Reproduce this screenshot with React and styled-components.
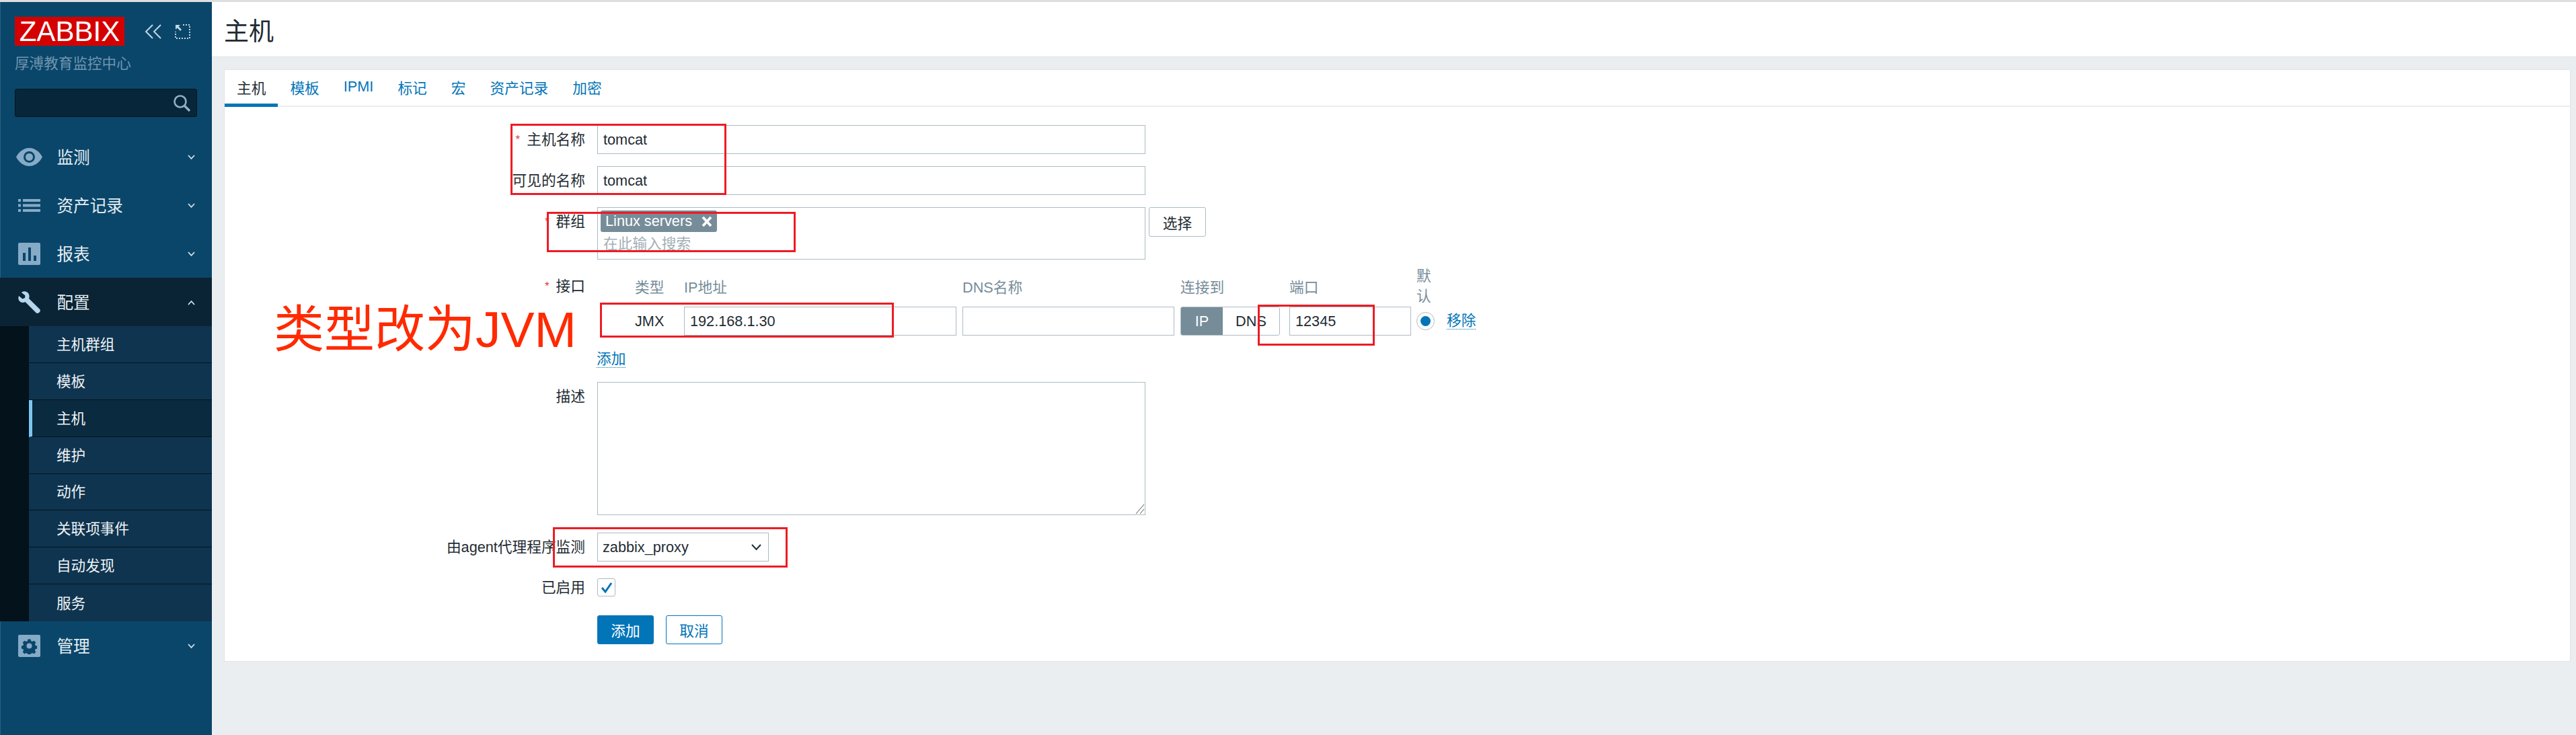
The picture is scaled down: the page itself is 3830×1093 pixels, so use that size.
import styled, { createGlobalStyle } from 'styled-components';

const GlobalStyle = createGlobalStyle`
	html, body {
		margin: 0;
		padding: 0;
		background: #ebeef0;
	}
	* {
		box-sizing: border-box;
	}
`;

const FONT = `"Liberation Sans", "Noto Sans CJK SC", sans-serif`;

const NAV_ICON_COLOR = '#86abc6';

const EyeIcon = () => (
	<svg width='39' height='27' viewBox='0 0 39 27'>
		<path d='M0 13.5C5 4.5 12 0 19.5 0S34 4.5 39 13.5C34 22.5 27 27 19.5 27S5 22.5 0 13.5Z' fill={NAV_ICON_COLOR} />
		<circle cx='19.5' cy='13.5' r='8.5' fill='#0a466a' />
		<circle cx='19.5' cy='13.5' r='5.5' fill={NAV_ICON_COLOR} />
	</svg>
);

const ListIcon = () => (
	<svg width='33' height='19' viewBox='0 0 33 19' fill={NAV_ICON_COLOR}>
		<rect x='0' y='0' width='4' height='4' />
		<rect x='0' y='7.5' width='4' height='4' />
		<rect x='0' y='15' width='4' height='4' />
		<rect x='7' y='0' width='26' height='4' />
		<rect x='7' y='7.5' width='26' height='4' />
		<rect x='7' y='15' width='26' height='4' />
	</svg>
);

const BarsIcon = () => (
	<svg width='33' height='33' viewBox='0 0 33 33'>
		<rect width='33' height='33' rx='2' fill={NAV_ICON_COLOR} />
		<rect x='7' y='15' width='4' height='12' fill='#0a466a' />
		<rect x='15' y='7' width='4' height='20' fill='#0a466a' />
		<rect x='23' y='19' width='4' height='8' fill='#0a466a' />
	</svg>
);

const WrenchIcon = () => (
	<svg width='33' height='33' viewBox='0 0 33 33'>
		<path
			d='M11 0.5C7.8 0 6 1 5 2L10.5 6.5 10 10 6.5 11.5 1 7C-0.2 10 0.2 13 2.2 15 4.4 17.2 8 17.4 10.5 16L27 32.5 C28.5 33.2 30 33 31.2 31.8 32.6 30.4 33.2 29 32.5 27.2L16 11C17.2 8 16.6 4.6 14.6 2.4 13.6 1.4 12.4 0.8 11 0.5Z'
			fill='#b5d6ec'
		/>
	</svg>
);

const GearIcon = () => (
	<svg width='33' height='33' viewBox='0 0 33 33'>
		<rect width='33' height='33' rx='2' fill={NAV_ICON_COLOR} />
		<path
			d='M14 4h5l.8 3.4 2.6 1.1 3-1.8 3.4 3.6-1.8 2.9 1 2.6 3 .8v5l-3 .8-1 2.6 1.8 2.9-3.4 3.6-3-1.8-2.6 1.1-.8 1.3h-5l-.8-1.3-2.6-1.1-3 1.8-3.4-3.6 1.8-2.9-1-2.6-3-.8v-5l3-.8 1-2.6-1.8-2.9 3.4-3.6 3 1.8 2.6-1.1Z'
			fill='#0a466a'
			transform='translate(3.3 3.3) scale(0.8)'
		/>
		<circle cx='16.5' cy='16.5' r='4' fill={NAV_ICON_COLOR} />
	</svg>
);

const Chevron = ({ up }) => (
	<ChevronWrap>
		<svg width='11' height='8' viewBox='0 0 11 8' fill='none' stroke='#d5e2ea' strokeWidth='1.8'>
			<path d={up ? 'M1 7L5.5 2 10 7' : 'M1 1L5.5 6 10 1'} />
		</svg>
	</ChevronWrap>
);

const NAV_TOP = [
	{ name: '监测', icon: <EyeIcon /> },
	{ name: '资产记录', icon: <ListIcon /> },
	{ name: '报表', icon: <BarsIcon /> },
];

const SUB_ITEMS = ['主机群组', '模板', '主机', '维护', '动作', '关联项事件', '自动发现', '服务'];

const TABS = ['主机', '模板', 'IPMI', '标记', '宏', '资产记录', '加密'];

const Sidebar = () => (
	<SidebarWrap>
		<LogoRow>
			<Logo>ZABBIX</Logo>
			<LogoTool $left='30px'>
				<svg width='26' height='22' viewBox='0 0 26 22' fill='none' stroke='#c6d6e0' strokeWidth='2'>
					<path d='M12 1L2 11l10 10M24 1L14 11l10 10' />
				</svg>
			</LogoTool>
			<LogoTool $left='19px'>
				<svg width='23' height='22' viewBox='0 0 23 22' fill='none' stroke='#c6d6e0' strokeWidth='2'>
					<path d='M12 1h10v20H1V11' strokeDasharray='2 2' />
					<path d='M1 1h7L5.6 3.4 10 8l-2 2-4.4-4.6L1 8Z' fill='#c6d6e0' stroke='none' />
				</svg>
			</LogoTool>
		</LogoRow>
		<Company>厚溥教育监控中心</Company>
		<SearchBox>
			<svg width='25' height='25' viewBox='0 0 25 25' fill='none' stroke='#8fb0c5'>
				<circle cx='10' cy='10' r='8.5' strokeWidth='2.6' />
				<path d='M16 16l8 8' strokeWidth='3.4' />
			</svg>
		</SearchBox>
		<NavList>
			{NAV_TOP.map(item => (
				<NavRow key={item.name}>
					<NavIcon>{item.icon}</NavIcon>
					<NavLabel>{item.name}</NavLabel>
					<Chevron />
				</NavRow>
			))}
			<NavRow $open>
				<NavIcon>
					<WrenchIcon />
				</NavIcon>
				<NavLabel>配置</NavLabel>
				<Chevron up />
			</NavRow>
			<SubList>
				{SUB_ITEMS.map(name => (
					<SubRow key={name} $active={name === '主机'}>
						{name}
					</SubRow>
				))}
			</SubList>
			<NavRow>
				<NavIcon>
					<GearIcon />
				</NavIcon>
				<NavLabel>管理</NavLabel>
				<Chevron />
			</NavRow>
		</NavList>
	</SidebarWrap>
);

const HostForm = () => (
	<Form>
		<FormRow $top='27px'>
			<Label $required>主机名称</Label>
			<TextInput $width='815px'>tomcat</TextInput>
		</FormRow>
		<FormRow $top='18px'>
			<Label>可见的名称</Label>
			<TextInput $width='815px'>tomcat</TextInput>
		</FormRow>
		<FormRow $top='18px'>
			<Label $required>群组</Label>
			<FieldWithButton>
				<MultiSelect>
					<Chip>
						Linux servers
						<svg width='16' height='17' viewBox='0 0 16 17' stroke='#fff' strokeWidth='3.8'>
							<path d='M2 2l12 13M14 2L2 15' />
						</svg>
					</Chip>
					<Placeholder>在此输入搜索</Placeholder>
				</MultiSelect>
				<SelectButton>选择</SelectButton>
			</FieldWithButton>
		</FormRow>
		<FormRow $top='9px'>
			<Label $required $offset='18px'>
				接口
			</Label>
			<InterfaceGrid>
				<ColHead $indent='56px'>类型</ColHead>
				<ColHead>IP地址</ColHead>
				<ColHead>DNS名称</ColHead>
				<ColHead>连接到</ColHead>
				<ColHead>端口</ColHead>
				<DefaultHead>默认</DefaultHead>
				<span />

				<TypeCell>JMX</TypeCell>
				<TextInput $width='405px'>192.168.1.30</TextInput>
				<TextInput $width='315px' />
				<Toggle>
					<ToggleSide $on>IP</ToggleSide>
					<ToggleSide>DNS</ToggleSide>
				</Toggle>
				<TextInput $width='181px'>12345</TextInput>
				<Radio />
				<DottedLink>移除</DottedLink>
			</InterfaceGrid>
		</FormRow>
		<FormRow $top='20px'>
			<span />
			<AddLink>
				<DottedLink>添加</DottedLink>
			</AddLink>
		</FormRow>
		<FormRow $top='19px'>
			<Label $offset='9px'>描述</Label>
			<TextArea>
				<svg width='16' height='16' viewBox='0 0 16 16' stroke='#555' strokeWidth='1' fill='none'>
					<path d='M15 1L3 15M15 8L9 15' />
				</svg>
			</TextArea>
		</FormRow>
		<FormRow $top='26px'>
			<Label $center>由agent代理程序监测</Label>
			<SelectBox>
				zabbix_proxy
				<svg width='15' height='10' viewBox='0 0 15 10' fill='none' stroke='#1f2c33' strokeWidth='2'>
					<path d='M1 1l6.5 7L14 1' />
				</svg>
			</SelectBox>
		</FormRow>
		<FormRow $top='25px'>
			<Label $center>已启用</Label>
			<Checkbox>
				<svg width='18' height='16' viewBox='0 0 18 16' fill='none' stroke='#0275b8' strokeWidth='3'>
					<path d='M2 8l5 6L16 1' />
				</svg>
			</Checkbox>
		</FormRow>
		<FormRow $top='28px'>
			<span />
			<ButtonRow>
				<PrimaryButton>添加</PrimaryButton>
				<OutlineButton>取消</OutlineButton>
			</ButtonRow>
		</FormRow>
	</Form>
);

const App = () => (
	<>
		<GlobalStyle />
		<Page>
			<TopLine />
			<Body>
				<Sidebar />
				<Main>
					<Header>
						<Title>主机</Title>
					</Header>
					<Card>
						<Tabs>
							{TABS.map(tab => (
								<Tab key={tab} $active={tab === '主机'}>
									{tab}
								</Tab>
							))}
						</Tabs>
						<HostForm />
					</Card>
				</Main>
			</Body>

			{/* hand drawn annotations on top of the screenshot */}
			<RedBox $x={759} $y={184} $w={321} $h={106} />
			<RedBox $x={813} $y={315} $w={370} $h={60} />
			<RedBox $x={892} $y={450} $w={437} $h={52} />
			<RedBox $x={1870} $y={453} $w={174} $h={61} />
			<RedBox $x={822} $y={784} $w={349} $h={60} />
			<Annotation>类型改为JVM</Annotation>
		</Page>
	</>
);

const Page = styled.div`
	position: relative;
	width: 3830px;
	height: 1093px;
	overflow: hidden;
	font-family: ${FONT};
	font-size: 21.7px;
	color: #1f2c33;
`;

const TopLine = styled.div`
	height: 3px;
	background: #dedede;
`;

const Body = styled.div`
	display: flex;
	height: 1090px;
`;

const SidebarWrap = styled.aside`
	width: 315px;
	flex-shrink: 0;
	background: #0a466a;
	border-left: 1px solid #2b5f80;
	padding-top: 22px;
`;

const LogoRow = styled.div`
	display: flex;
	align-items: center;
	padding-left: 21px;
`;

const Logo = styled.div`
	width: 163px;
	height: 43px;
	background: #d40000;
	color: #fff;
	font-size: 42px;
	line-height: 43px;
	text-align: center;
`;

const LogoTool = styled.span`
	display: flex;
	margin-left: ${props => props.$left};
`;

const Company = styled.div`
	margin: 15px 0 0 21px;
	font-size: 21.6px;
	line-height: 24px;
	color: #6f95af;
`;

const SearchBox = styled.div`
	display: flex;
	align-items: center;
	justify-content: flex-end;
	width: 271px;
	height: 42px;
	margin: 25px 0 0 21px;
	padding-right: 9px;
	background: #07263a;
	border: 1px solid #04141f;
	border-radius: 3px;
`;

const NavList = styled.nav`
	margin-top: 23px;
	margin-left: -1px;
`;

const NavRow = styled.div`
	display: flex;
	align-items: center;
	height: 72px;
	padding-right: 25px;
	background: ${props => (props.$open ? '#0a2435' : 'transparent')};
	color: #e6edf2;
`;

const NavIcon = styled.span`
	display: flex;
	justify-content: center;
	width: 39px;
	margin: 0 21.5px 0 24px;
`;

const NavLabel = styled.span`
	flex: 1;
	padding-bottom: 3px;
	font-size: 24.6px;
`;

const ChevronWrap = styled.span`
	display: flex;
	margin-top: 2px;
`;

const SubList = styled.div`
	padding-left: 43px;
	background: #03121b;
`;

const SubRow = styled.div`
	display: flex;
	align-items: center;
	height: 54.875px;
	padding-left: ${props => (props.$active ? '36px' : '41px')};
	padding-bottom: 3px;
	border-left: ${props => (props.$active ? '5px solid #7cc6f2' : 'none')};
	border-bottom: 1px solid #04141f;
	background: ${props => (props.$active ? '#0a2a3f' : '#0f344f')};
	color: #eef3f6;
	font-size: 21.6px;

	&:last-child {
		border-bottom: none;
	}
`;

const Main = styled.main`
	flex: 1;
	min-width: 0;
	background: #ebeef0;
`;

const Header = styled.header`
	display: flex;
	align-items: center;
	height: 82px;
	padding: 0 0 0 18px;
	background: #fff;
	border-bottom: 1px solid #dfe4e7;
`;

const Title = styled.h1`
	margin: 0;
	font-size: 37px;
	font-weight: 400;
	color: #1f2c33;
`;

const Card = styled.section`
	height: 881px;
	margin: 18px 8px 0 18px;
	background: #fff;
	border: 1px solid #dfe4e7;
`;

const Tabs = styled.div`
	display: flex;
	height: 55px;
	border-bottom: 2px solid #ebeef0;
`;

const Tab = styled.div`
	display: flex;
	align-items: center;
	height: 55px;
	padding: 0 18px;
	color: ${props => (props.$active ? '#1f2c33' : '#0275b8')};
	border-bottom: ${props => (props.$active ? '5px solid #0275b8' : 'none')};
	padding-bottom: ${props => (props.$active ? '0' : '5px')};
`;

const Form = styled.form`
	display: block;
`;

const FormRow = styled.div`
	display: grid;
	grid-template-columns: 536px 1fr;
	column-gap: 18px;
	margin-top: ${props => props.$top};
`;

const Label = styled.div`
	position: relative;
	display: flex;
	justify-content: flex-end;
	align-items: ${props => (props.$center ? 'center' : 'flex-start')};
	padding-top: ${props => props.$offset || (props.$center ? '0' : '9px')};
	white-space: nowrap;
	line-height: 25px;

	&::before {
		content: ${props => (props.$required ? "'*'" : 'none')};
		color: #e33734;
		margin: 3px 10px 0 0;
		font-size: 17px;
		line-height: 20px;
	}
`;

const TextInput = styled.div`
	display: flex;
	align-items: center;
	width: ${props => props.$width};
	height: 43px;
	padding: 0 8px;
	background: #fff;
	border: 1.5px solid #acbbc2;
`;

const FieldWithButton = styled.div`
	display: flex;
	align-items: flex-start;
	gap: 5px;
`;

const MultiSelect = styled.div`
	width: 815px;
	height: 78px;
	padding: 4px;
	border: 1.5px solid #acbbc2;
`;

const Chip = styled.div`
	display: inline-flex;
	align-items: center;
	gap: 14px;
	height: 32px;
	padding: 0 7px;
	background: #768d99;
	border-radius: 3px;
	color: #fff;
`;

const Placeholder = styled.div`
	margin: 5px 0 0 4px;
	line-height: 25px;
	color: #a3afb6;
`;

const SelectButton = styled.button`
	width: 85px;
	height: 44px;
	padding: 0;
	background: #fff;
	border: 1.5px solid #acbbc2;
	border-radius: 3px;
	font: inherit;
	color: #1f2c33;
`;

const InterfaceGrid = styled.div`
	display: grid;
	grid-template-columns: 129px 414px 324px 162px 189px 45px auto;
	grid-template-rows: 61px 43px;
	align-items: center;
	justify-content: start;
`;

const ColHead = styled.div`
	padding-left: ${props => props.$indent || '0'};
	color: #768d99;
	white-space: nowrap;
`;

const DefaultHead = styled(ColHead)`
	width: 24px;
	line-height: 30px;
	white-space: normal;
`;

const TypeCell = styled.div`
	padding-left: 56px;
`;

const Toggle = styled.div`
	display: flex;
	width: 148px;
	height: 43px;
	border: 1.5px solid #acbbc2;
	border-radius: 3px;
	overflow: hidden;
`;

const ToggleSide = styled.div`
	display: flex;
	align-items: center;
	justify-content: center;
	flex: ${props => (props.$on ? '0 0 62px' : '1')};
	background: ${props => (props.$on ? '#768d99' : '#fff')};
	color: ${props => (props.$on ? '#fff' : '#1f2c33')};
`;

const Radio = styled.div`
	display: flex;
	align-items: center;
	justify-content: center;
	width: 27px;
	height: 27px;
	border: 1.5px solid #acbbc2;
	border-radius: 50%;

	&::after {
		content: '';
		width: 15px;
		height: 15px;
		border-radius: 50%;
		background: #0275b8;
	}
`;

const DottedLink = styled.span`
	color: #0275b8;
	line-height: 24px;
	border-bottom: 1px dotted #0275b8;
`;

const AddLink = styled.div`
	display: flex;
	height: 30px;
	align-items: center;
	margin-left: -1px;
`;

const TextArea = styled.div`
	display: flex;
	align-items: flex-end;
	justify-content: flex-end;
	width: 815px;
	height: 198px;
	border: 1.5px solid #acbbc2;
`;

const SelectBox = styled.div`
	display: flex;
	align-items: center;
	justify-content: space-between;
	width: 255px;
	height: 43px;
	padding: 0 10px 0 7px;
	border: 1.5px solid #acbbc2;
`;

const Checkbox = styled.div`
	display: flex;
	align-items: center;
	justify-content: center;
	width: 27px;
	height: 27px;
	border: 1.5px solid #acbbc2;
	border-radius: 3px;
`;

const ButtonRow = styled.div`
	display: flex;
	gap: 18px;
`;

const PrimaryButton = styled.button`
	width: 84px;
	height: 43px;
	padding: 0;
	background: #0275b8;
	border: 1.5px solid #0275b8;
	border-radius: 3px;
	color: #fff;
	font: inherit;
`;

const OutlineButton = styled(PrimaryButton)`
	background: #fff;
	color: #0275b8;
`;

const RedBox = styled.div`
	position: absolute;
	left: ${props => props.$x}px;
	top: ${props => props.$y}px;
	width: ${props => props.$w}px;
	height: ${props => props.$h}px;
	border: 3px solid #ed1c24;
`;

const Annotation = styled.div`
	position: absolute;
	left: 407px;
	top: 447px;
	font-size: 75px;
	line-height: 86px;
	color: #ff2a00;
	white-space: nowrap;
`;

export default App;
